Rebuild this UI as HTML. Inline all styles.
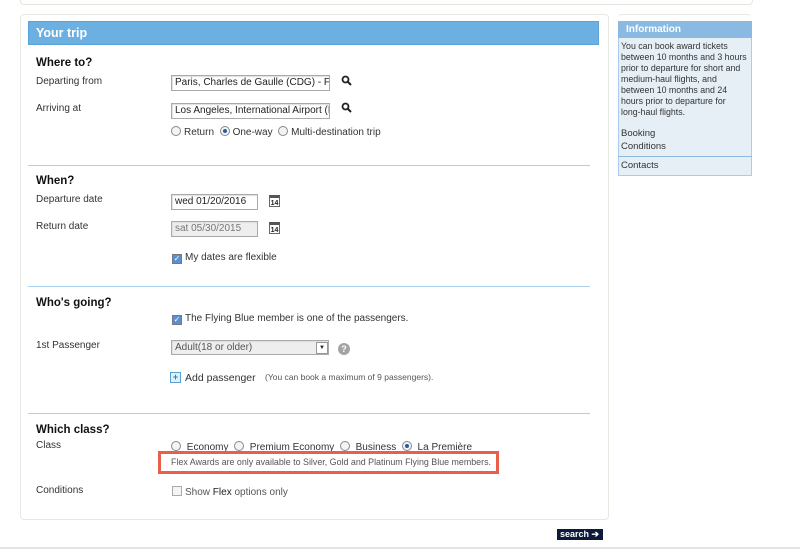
<!DOCTYPE html>
<html><head><style>
body{margin:0;width:800px;height:549px;background:#fff;font-family:"Liberation Sans",Arial,sans-serif;position:relative;overflow:hidden;color:#222}
.a{position:absolute}
.l{font-size:10px;color:#333;position:absolute}
.h{font-size:11.5px;font-weight:bold;color:#111;position:absolute}
.inp{position:absolute;border:1px solid #aaa;background:#fff;font-size:10px;padding:1px 3px;box-sizing:border-box;height:16px;line-height:12px;overflow:hidden;white-space:nowrap;box-shadow:inset 1px 1px 1px #ddd}
.sep{position:absolute;left:28px;width:562px;height:1px;background:#a9d0ee}
.rad{display:inline-block;width:8px;height:8px;border:1px solid #888;border-radius:50%;vertical-align:-1px;margin-right:3px;background:#f4f4f4;position:relative}
.rad.on:after{content:"";position:absolute;left:2px;top:2px;width:4px;height:4px;border-radius:50%;background:#2a5aa0}
.cb{display:inline-block;width:8px;height:8px;border:1px solid #778;background:#5c8fd0;vertical-align:-1px;margin-right:3px;color:#fff;font-size:8px;line-height:8px;text-align:center}
.cal{position:absolute;width:11px;height:12px;border:1px solid #666;border-top:3px solid #555;font-size:7px;font-weight:bold;text-align:center;line-height:11px;box-sizing:border-box;background:#fff}
</style></head><body>
<div class="a" style="left:20px;top:-6px;width:731px;height:9px;border:1px solid #e6e6e0;border-radius:4px"></div>
<div class="a" style="left:20px;top:14px;width:587px;height:504px;border:1px solid #e8e8e2;border-radius:4px"></div>
<div class="a" style="left:28px;top:21px;width:571px;height:24px;background:#6cb0e2;border:1px solid #5aa2da;box-sizing:border-box;color:#fff;font-weight:bold;font-size:12.5px;line-height:22px;padding-left:7px">Your trip</div>

<div class="h" style="left:36px;top:57px">Where to?</div>
<div class="l" style="left:36px;top:76px">Departing from</div>
<div class="inp" style="left:171px;top:75px;width:159px">Paris, Charles de Gaulle (CDG) - Fra</div>
<div class="l" style="left:36px;top:103px">Arriving at</div>
<div class="inp" style="left:171px;top:103px;width:159px">Los Angeles, International Airport (LA</div>
<svg class="a" style="left:341px;top:75px" width="11" height="11"><circle cx="4.5" cy="4.5" r="3" stroke="#222" stroke-width="1.8" fill="none"/><line x1="7" y1="7" x2="10" y2="10" stroke="#222" stroke-width="2"/></svg>
<svg class="a" style="left:341px;top:102px" width="11" height="11"><circle cx="4.5" cy="4.5" r="3" stroke="#222" stroke-width="1.8" fill="none"/><line x1="7" y1="7" x2="10" y2="10" stroke="#222" stroke-width="2"/></svg>
<div class="l" style="left:171px;top:126px"><span class="rad"></span>Return &nbsp;<span class="rad on"></span>One-way &nbsp;<span class="rad"></span>Multi-destination trip</div>
<div class="sep" style="top:165px"></div>

<div class="h" style="left:36px;top:175px">When?</div>
<div class="l" style="left:36px;top:194px">Departure date</div>
<div class="inp" style="left:171px;top:194px;width:87px">wed 01/20/2016</div>
<div class="cal" style="left:269px;top:195px">14</div>
<div class="l" style="left:36px;top:221px">Return date</div>
<div class="inp" style="left:171px;top:221px;width:87px;background:#eee;color:#777">sat 05/30/2015</div>
<div class="cal" style="left:269px;top:222px">14</div>
<div class="l" style="left:172px;top:252px"><span class="cb">✓</span>My dates are flexible</div>
<div class="sep" style="top:286px"></div>

<div class="h" style="left:36px;top:297px">Who's going?</div>
<div class="l" style="left:172px;top:313px"><span class="cb">✓</span>The Flying Blue member is one of the passengers.</div>
<div class="l" style="left:36px;top:340px">1st Passenger</div>
<div class="inp" style="left:171px;top:340px;width:158px;height:15px;background:#eee;color:#555;line-height:11px">Adult(18 or older)</div>
<div class="a" style="left:316px;top:342px;width:10px;height:10px;border:1px solid #999;background:#fff;font-size:6px;text-align:center;line-height:10px">▼</div>
<div class="a" style="left:338px;top:343px;width:12px;height:12px;border-radius:50%;background:#a4a4a4;color:#fff;font-size:9px;font-weight:bold;text-align:center;line-height:12px">?</div>
<div class="a" style="left:170px;top:372px;width:9px;height:9px;border:1px solid #5aa0d0;background:#dff0fb;color:#2a80c0;font-size:9px;line-height:8px;text-align:center;font-weight:bold">+</div>
<div class="l" style="left:185px;top:372px;font-size:10.5px">Add passenger</div>
<div class="l" style="left:265px;top:372px;font-size:8.5px;color:#555">(You can book a maximum of 9 passengers).</div>
<div class="sep" style="top:413px"></div>

<div class="h" style="left:36px;top:424px">Which class?</div>
<div class="l" style="left:36px;top:440px">Class</div>
<div class="l" style="left:171px;top:441px;color:#333"><span class="rad"></span>&nbsp;Economy &nbsp;<span class="rad"></span>&nbsp;Premium Economy &nbsp;<span class="rad"></span>&nbsp;Business &nbsp;<span class="rad on"></span>&nbsp;La Première</div>
<div class="a" style="left:158px;top:451px;width:341px;height:23px;border:3px solid #e8604c;box-sizing:border-box;background:#fff"></div>
<div class="l" style="left:171px;top:457px;font-size:8.9px;color:#555">Flex Awards are only available to Silver, Gold and Platinum Flying Blue members.</div>
<div class="l" style="left:36px;top:485px">Conditions</div>
<div class="l" style="left:172px;top:486px;color:#555"><span class="cb" style="background:#f4f4f4;border-color:#aaa"></span>Show <span style="color:#222">Flex</span> options only</div>

<div class="a" style="left:557px;top:529px;width:46px;height:11px;background:#0d1a3a;color:#fff;font-size:9px;font-weight:bold;line-height:11px;padding-left:3px;box-sizing:border-box">search ➔</div>
<div class="a" style="left:0;top:547px;width:800px;height:2px;background:#e4e4e0"></div>

<div class="a" style="left:618px;top:14px;width:133px;height:8px;border-top:1px solid #e8e8e2;border-radius:4px 4px 0 0"></div>
<div class="a" style="left:618px;top:21px;width:134px;height:155px;border:1px solid #a9cdee;box-sizing:border-box;background:#e6eff6"></div>
<div class="a" style="left:618px;top:21px;width:134px;height:17px;background:#8ab9e2;color:#fff;font-weight:bold;font-size:10px;line-height:17px;padding-left:8px;box-sizing:border-box">Information</div>
<div class="a" style="left:621px;top:41px;width:132px;font-size:8.8px;line-height:11px;color:#333;white-space:nowrap">You can book award tickets<br>between 10 months and 3 hours<br>prior to departure for short and<br>medium-haul flights, and<br>between 10 months and 24<br>hours prior to departure for<br>long-haul flights.</div>
<div class="a" style="left:621px;top:128px;font-size:9.5px;line-height:12.5px;color:#333">Booking<br>Conditions</div>
<div class="a" style="left:618px;top:156px;width:134px;height:1px;background:#8ab9e2"></div>
<div class="a" style="left:621px;top:160px;font-size:9.5px;color:#333">Contacts</div>
</body></html>
